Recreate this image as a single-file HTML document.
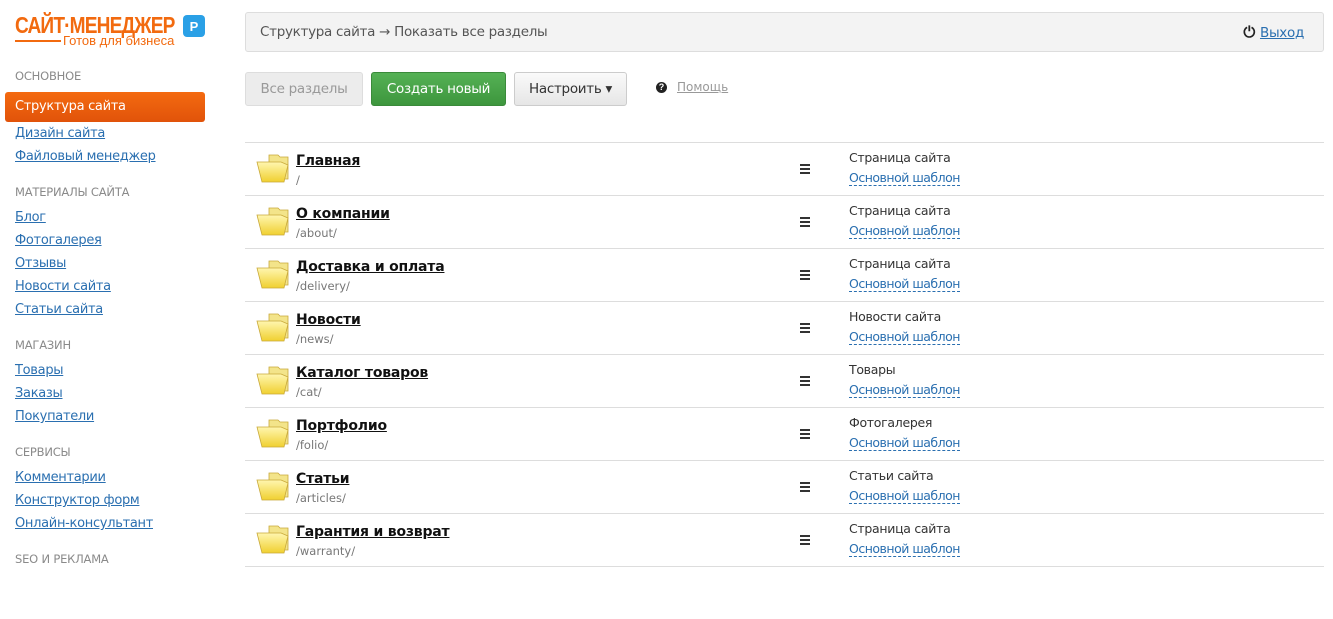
<!DOCTYPE html>
<html><head><meta charset="utf-8"><style>
*{box-sizing:border-box;margin:0;padding:0}
body{width:1333px;height:567px;overflow:hidden;background:#fff;font-family:"DejaVu Sans","Liberation Sans",sans-serif;font-size:13px;color:#333;position:relative}
.logo{position:absolute;left:15px;top:14px;width:195px;height:36px}
.lt{position:absolute;left:0;top:0;font-family:"Liberation Sans",sans-serif;font-weight:bold;font-size:23px;color:#f26a0f;letter-spacing:-1px;line-height:22px;white-space:nowrap;transform:scaleX(.83);transform-origin:0 0}
.ls{font-family:"Liberation Sans",sans-serif;font-size:13px;color:#f26a0f;position:absolute;left:48px;top:20px;white-space:nowrap;line-height:14px}
.ll{position:absolute;left:0;top:26px;width:46px;height:2px;background:#f26a0f}
.ic{position:absolute;left:168px;top:1px;width:22px;height:22px;border-radius:4px;background:#2aa0e6;color:#fff;font:bold 13px "Liberation Sans";text-align:center;line-height:24px}
.h{position:absolute;left:15px;font-size:11.5px;color:#8a8a8a;text-transform:uppercase;letter-spacing:-.2px}
.l{position:absolute;left:15px;font-size:13px;color:#2a6fb0;text-decoration:underline;white-space:nowrap;letter-spacing:-.3px}
.act{position:absolute;left:5px;top:92px;width:200px;height:30px;border-radius:3px;background:linear-gradient(#f46a10,#e1530a);color:#fff;padding-left:10px;line-height:29px;font-size:13px;letter-spacing:-.3px}
.top{position:absolute;left:245px;top:12px;width:1079px;height:40px;background:#f3f3f3;border:1px solid #ddd;border-radius:3px;line-height:38px;padding-left:14px;color:#555;font-size:13.5px;letter-spacing:-.3px}
.top .ex{position:absolute;right:19px;top:0;color:#2a6fb0;text-decoration:underline}
.btn{position:absolute;top:72px;height:34px;border-radius:3px;line-height:32px;text-align:center;font-size:13.5px;letter-spacing:-.3px}
.row{position:absolute;left:245px;width:1079px;height:53px;border-top:1px solid #ddd}
.row .f{position:absolute;left:10px;top:8px}
.row .t{position:absolute;left:51px;top:10px;font-weight:bold;font-size:14px;color:#111;text-decoration:underline;letter-spacing:-.2px}
.row .p{position:absolute;left:51px;top:30px;font-size:11.5px;color:#777}
.row .m{position:absolute;left:555px;top:21px;width:10px}
.row .m i{display:block;height:2px;background:#333;margin-bottom:2px}
.row .ty{position:absolute;left:604px;top:7px;font-size:12.5px;color:#333;letter-spacing:-.3px}
.row .sh{position:absolute;left:604px;top:27px;font-size:12.5px;color:#2a6fb0;border-bottom:1px dashed #2a6fb0;line-height:15px;letter-spacing:-.5px}
</style></head><body>
<div class="logo"><div class="lt">САЙТ·МЕНЕДЖЕР</div><div class="ll"></div><div class="ls">Готов для бизнеса</div><div class="ic">P</div></div>
<div class="h" style="top:69px">Основное</div>
<div class="act">Структура сайта</div>
<div class="l" style="top:126px">Дизайн сайта</div>
<div class="l" style="top:149px">Файловый менеджер</div>
<div class="h" style="top:185px">Материалы сайта</div>
<div class="l" style="top:210px">Блог</div>
<div class="l" style="top:233px">Фотогалерея</div>
<div class="l" style="top:256px">Отзывы</div>
<div class="l" style="top:279px">Новости сайта</div>
<div class="l" style="top:302px">Статьи сайта</div>
<div class="h" style="top:338px">Магазин</div>
<div class="l" style="top:363px">Товары</div>
<div class="l" style="top:386px">Заказы</div>
<div class="l" style="top:409px">Покупатели</div>
<div class="h" style="top:445px">Сервисы</div>
<div class="l" style="top:470px">Комментарии</div>
<div class="l" style="top:493px">Конструктор форм</div>
<div class="l" style="top:516px">Онлайн-консультант</div>
<div class="h" style="top:552px">SEO и реклама</div>

<div class="top">Структура сайта → Показать все разделы<span class="ex"><span style="color:#222;display:inline-block;margin-right:5px;font-size:15px;font-weight:bold">⏻</span>Выход</span></div>
<div class="btn" style="left:245px;width:118px;background:#ececec;border:1px solid #ddd;color:#999">Все разделы</div>
<div class="btn" style="left:371px;width:135px;background:linear-gradient(#55b155,#3d963d);border:1px solid #3a8a3a;color:#fff">Создать новый</div>
<div class="btn" style="left:514px;width:113px;background:linear-gradient(#fafafa,#e6e6e6);border:1px solid #ccc;color:#333">Настроить ▾</div>
<div style="position:absolute;left:656px;top:82px;width:11px;height:11px;border-radius:50%;background:#222;color:#fff;font:bold 9px sans-serif;text-align:center;line-height:11px">?</div>
<div style="position:absolute;left:677px;top:80px;font-size:12px;color:#999;text-decoration:underline">Помощь</div>

<svg width="0" height="0" style="position:absolute"><defs><linearGradient id="g" x1="0" y1="0" x2="0" y2="1"><stop offset="0" stop-color="#fff6b0"/><stop offset="1" stop-color="#f0d030"/></linearGradient></defs></svg>
<div id="rows"></div>
<script>
var d=[["Главная","/","Страница сайта"],["О компании","/about/","Страница сайта"],["Доставка и оплата","/delivery/","Страница сайта"],["Новости","/news/","Новости сайта"],["Каталог товаров","/cat/","Товары"],["Портфолио","/folio/","Фотогалерея"],["Статьи","/articles/","Статьи сайта"],["Гарантия и возврат","/warranty/","Страница сайта"]];
var h="";d.forEach(function(r,i){h+='<div class="row" style="top:'+(142+i*53)+'px"><svg class="f" width="36" height="34" viewBox="0 0 36 34"><path d="M14 4h9l2 2h8v22H14z" fill="#f3e48a" stroke="#c9a93a" stroke-width=".8"/><path d="M2 11h24l7 3-4 17H7z" fill="url(#g)" stroke="#c9a93a" stroke-width=".8"/></svg><div class="t">'+r[0]+'</div><div class="p">'+r[1]+'</div><div class="m"><i></i><i></i><i></i></div><div class="ty">'+r[2]+'</div><div class="sh">Основной шаблон</div></div>'});
h+='<div class="row" style="top:566px"></div>';
document.getElementById("rows").innerHTML=h;
</script>
</body></html>
